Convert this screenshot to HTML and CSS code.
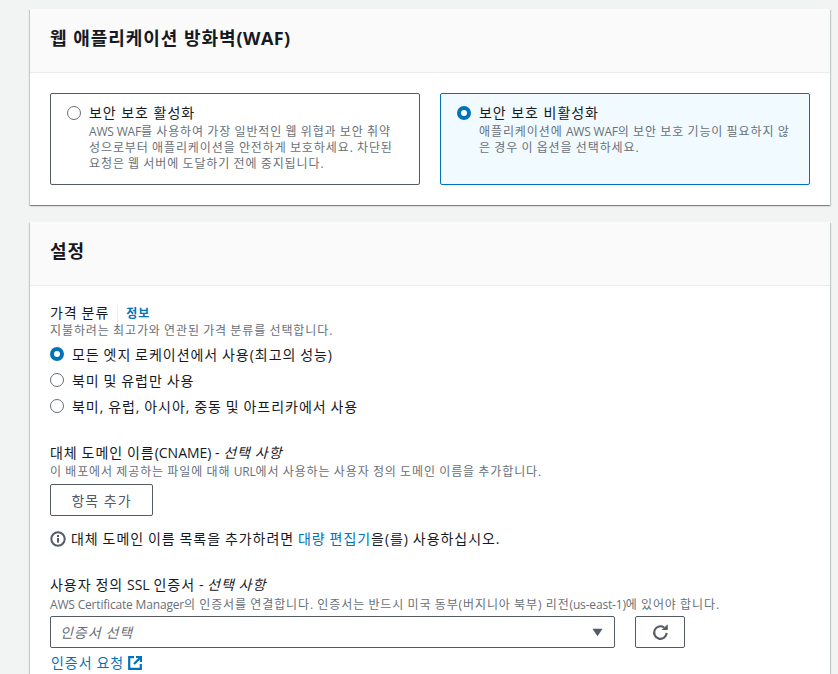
FILE: index.html
```html
<!DOCTYPE html>
<html lang="ko">
<head>
<meta charset="utf-8">
<title>배포 설정</title>
<link rel="stylesheet" href="styles.css">
</head>
<body>
<main class="page">
  <section class="card card-waf">
    <header class="card-head"><h2>웹 애플리케이션 방화벽<span class="en">(WAF)</span></h2></header>
    <div class="card-body tiles">
      <div class="tile">
        <span class="radio"></span>
        <div class="tile-text">
          <div class="tile-title">보안 보호 활성화</div>
          <div class="desc"><span class="en">AWS WAF</span>를 사용하여 가장 일반적인 웹 위협과 보안 취약<br>성으로부터 애플리케이션을 안전하게 보호하세요. 차단된<br>요청은 웹 서버에 도달하기 전에 중지됩니다.</div>
        </div>
      </div>
      <div class="tile tile-on">
        <span class="radio radio-on"></span>
        <div class="tile-text">
          <div class="tile-title">보안 보호 비활성화</div>
          <div class="desc">애플리케이션에 <span class="en">AWS WAF</span>의 보안 보호 기능이 필요하지 않<br>은 경우 이 옵션을 선택하세요.</div>
        </div>
      </div>
    </div>
  </section>

  <section class="card card-settings">
    <header class="card-head"><h2>설정</h2></header>
    <div class="card-body form">
      <div class="field field-price">
        <div class="label">가격 분류<span class="info">정보</span></div>
        <div class="desc">지불하려는 최고가와 연관된 가격 분류를 선택합니다.</div>
        <div class="options">
          <div class="option"><span class="radio radio-on"></span><span>모든 엣지 로케이션에서 사용(최고의 성능)</span></div>
          <div class="option"><span class="radio"></span><span>북미 및 유럽만 사용</span></div>
          <div class="option"><span class="radio"></span><span>북미, 유럽, 아시아, 중동 및 아프리카에서 사용</span></div>
        </div>
      </div>

      <div class="field field-cname">
        <div class="label">대체 도메인 이름<span class="en">(CNAME) - </span><i>선택 사항</i></div>
        <div class="desc">이 배포에서 제공하는 파일에 대해 <span class="en">URL</span>에서 사용하는 사용자 정의 도메인 이름을 추가합니다.</div>
        <button class="btn btn-add" type="button">항목 추가</button>
        <div class="note">
          <svg class="note-icon" viewBox="0 0 16 16" width="16" height="16" aria-hidden="true"><circle cx="8" cy="8" r="6.7" fill="none" stroke="#545b64" stroke-width="2"/><rect x="7" y="7" width="2" height="4.6" fill="#545b64"/><rect x="7" y="4" width="2" height="2" fill="#545b64"/></svg>
          <span>대체 도메인 이름 목록을 추가하려면 <span class="link">대량 편집기</span>을(를) 사용하십시오.</span>
        </div>
      </div>

      <div class="field field-ssl">
        <div class="label">사용자 정의 <span class="en">SSL</span> 인증서 <span class="en">- </span><i>선택 사항</i></div>
        <div class="desc"><span class="en">AWS Certificate Manager</span>의 인증서를 연결합니다. 인증서는 반드시 미국 동부(버지니아 북부) 리전<span class="en">(us-east-1)</span>에 있어야 합니다.</div>
        <div class="select-row">
          <div class="select">
            <span class="placeholder">인증서 선택</span>
            <svg class="caret" viewBox="0 0 12 9" width="11" height="9" aria-hidden="true"><path d="M0.5 0.5H11.5L6 8.5Z" fill="#545b64"/></svg>
          </div>
          <button class="btn btn-refresh" type="button" aria-label="새로 고침">
            <svg viewBox="0 0 16 16" width="17" height="17" aria-hidden="true"><path d="M13.8 8.4A5.9 5.9 0 1 1 11.4 3.3" fill="none" stroke="#545b64" stroke-width="2"/><path d="M9 5.6H14.8V0.2Z" fill="#545b64"/></svg>
          </button>
        </div>
        <div class="req link"><span>인증서 요청</span>
          <svg viewBox="0 0 14 14" width="14" height="14" aria-hidden="true"><path d="M6 1.2H1.2V12.8H12.8V8" fill="none" stroke="#0073bb" stroke-width="2.2"/><path d="M8 1H13V6" fill="none" stroke="#0073bb" stroke-width="2.2"/><path d="M12.6 1.4L6 8" fill="none" stroke="#0073bb" stroke-width="2.2"/></svg>
        </div>
      </div>
    </div>
  </section>
</main>
</body>
</html>
```
FILE: styles.css
```css
html, body {
  margin: 0;
  height: 674px;
  overflow: hidden;
}
body {
  background: #f2f3f3;
  color: #16191f;
  font-family: "Open Sans", "Noto Sans CJK KR", sans-serif;
  font-size: 12px;
  letter-spacing: 0.08em;
  word-spacing: -0.06em;
}
.en {
  letter-spacing: 0;
  word-spacing: 0;
}
.page {
  box-sizing: border-box;
  width: 800px;
  margin-left: 30px;
  padding-top: 9px;
  display: flex;
  flex-direction: column;
  gap: 17px;
}
.card {
  background: #fff;
  box-shadow: 0 1px 1px 0 rgba(0, 28, 36, 0.3), 1px 1px 1px 0 rgba(0, 28, 36, 0.15), -1px 1px 1px 0 rgba(0, 28, 36, 0.15);
}
.card-head {
  background: #fafafa;
  border-bottom: 1px solid #eaeded;
  height: 64px;
  box-sizing: border-box;
  padding: 0 20px 5px;
  display: flex;
  align-items: center;
}
.card-head h2 {
  margin: 0;
  font-size: 18px;
  font-weight: 700;
  line-height: 24px;
  word-spacing: 0;
}
.card-head h2 .en {
  letter-spacing: 0.025em;
}
.tiles {
  height: 132px;
  box-sizing: border-box;
  padding: 20px;
  display: grid;
  grid-template-columns: 370px 370px;
  column-gap: 20px;
}
.tile {
  box-sizing: border-box;
  border: 1px solid #545b64;
  border-radius: 2px;
  padding: 10px 16px;
  display: flex;
  gap: 8px;
}
.tile-on {
  background: #f1faff;
  border-color: #0073bb;
}
.tile-title {
  font-size: 14px;
  line-height: 16px;
  margin-bottom: 3px;
  word-spacing: 0;
}
.desc {
  color: #687078;
  font-size: 12px;
  line-height: 16px;
  white-space: nowrap;
  letter-spacing: 0.075em;
}
.desc .en {
  letter-spacing: -0.015em;
}
.tile-text {
  margin-top: 1px;
}
.radio {
  flex: none;
  box-sizing: border-box;
  width: 14px;
  height: 14px;
  margin-top: 2px;
  border: 1px solid #687078;
  border-radius: 50%;
  background: #fff;
}
.radio-on {
  border: 4px solid #0073bb;
}
.form {
  padding: 18px 20px 40px;
}
.label {
  font-size: 14px;
  line-height: 18px;
}
.field .desc {
  margin-top: 2px;
}
.field-price .desc {
  margin-top: 0;
}
.field-ssl .desc {
  margin-top: 3px;
}
.info {
  color: #0073bb;
  font-size: 12px;
  font-weight: 700;
  margin-left: 8px;
  padding-left: 8px;
  border-left: 1px solid #eaeded;
}
.options {
  margin-top: 2px;
}
.option {
  display: flex;
  align-items: center;
  gap: 8px;
  font-size: 14px;
  height: 26px;
}
.option .radio {
  margin-top: 0;
}
.field-cname {
  margin-top: 25px;
}
.btn {
  box-sizing: border-box;
  background: #fff;
  border: 1px solid #545b64;
  border-radius: 2px;
  color: #545b64;
  font: inherit;
  font-size: 14px;
  letter-spacing: inherit;
  word-spacing: 0;
  padding: 0;
  display: flex;
  align-items: center;
  justify-content: center;
}
.btn-add {
  width: 103px;
  height: 32px;
  margin-top: 4px;
}
.note {
  display: flex;
  align-items: center;
  gap: 5px;
  margin-top: 13px;
  font-size: 14px;
  line-height: 20px;
}
.link {
  color: #0073bb;
}
.field-ssl {
  margin-top: 27px;
}
.select-row {
  display: flex;
  gap: 20px;
  margin-top: 3px;
}
.select {
  box-sizing: border-box;
  width: 565px;
  height: 32px;
  border: 1px solid #545b64;
  border-radius: 2px;
  padding: 0 11px 0 9px;
  display: flex;
  align-items: center;
  justify-content: space-between;
}
.placeholder {
  color: #687078;
  font-size: 14px;
  font-style: italic;
}
.btn-refresh {
  width: 50px;
  height: 32px;
}
.req {
  display: flex;
  align-items: center;
  gap: 4px;
  font-size: 14px;
  margin-top: 5px;
  padding-left: 1px;
  line-height: 20px;
}
```
